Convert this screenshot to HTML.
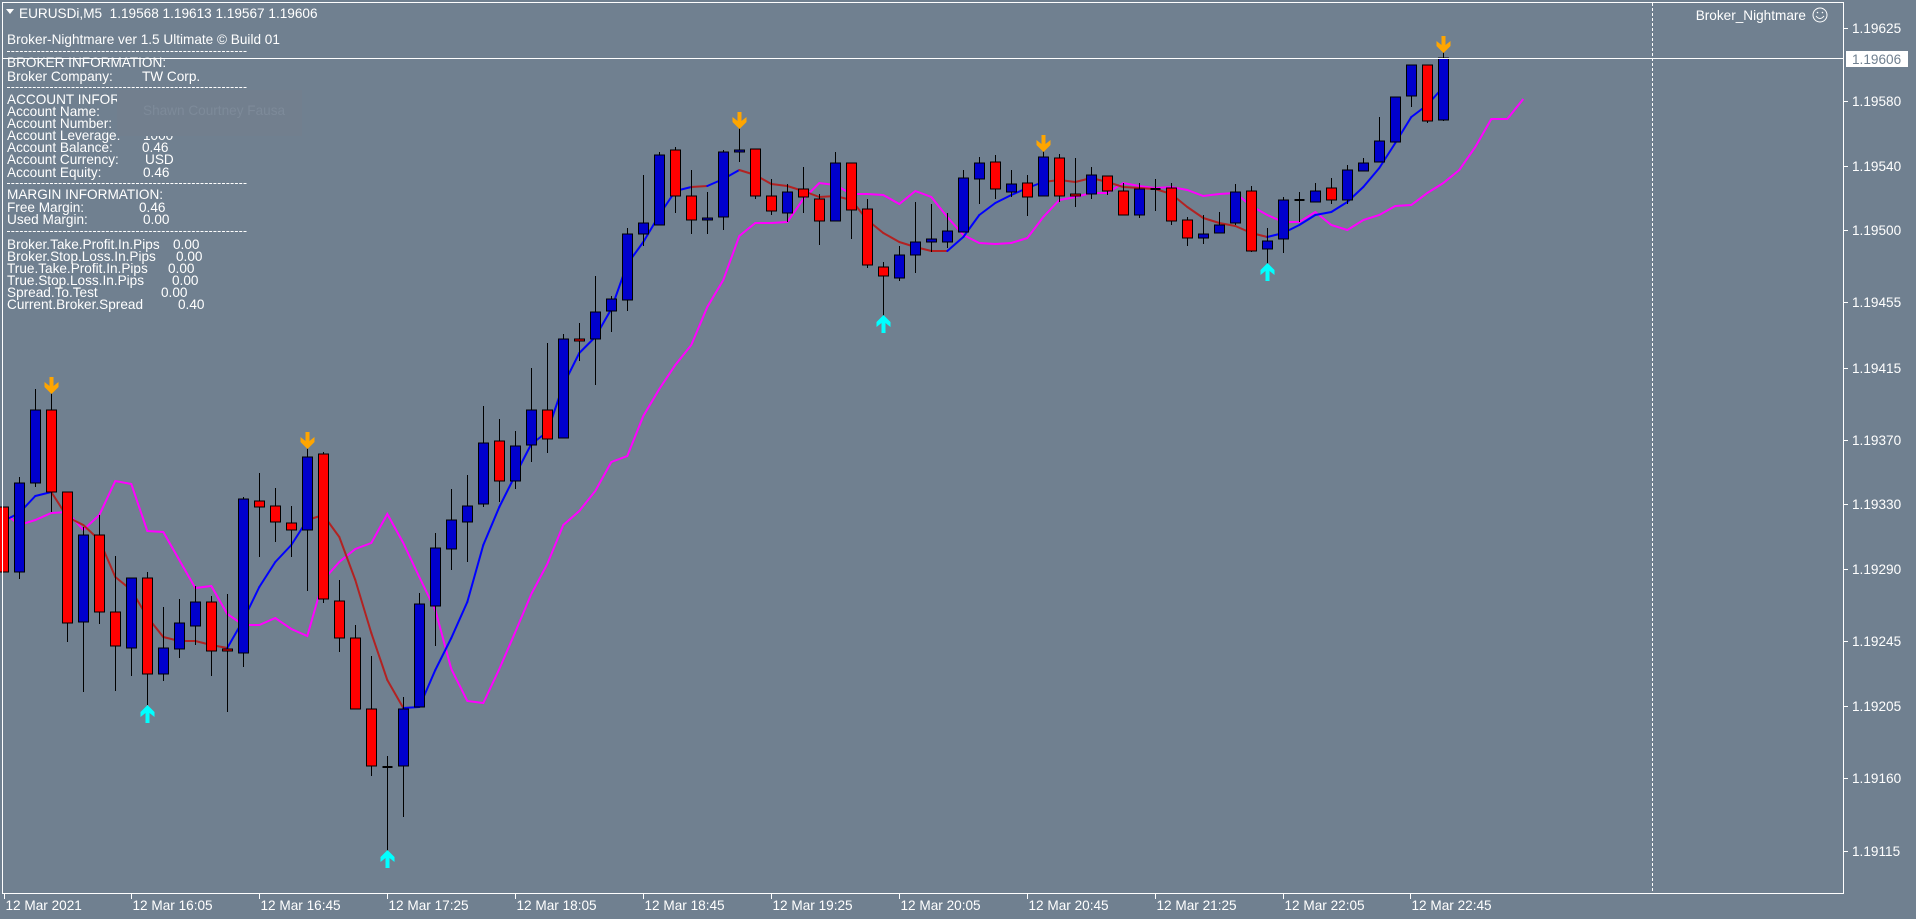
<!DOCTYPE html>
<html><head><meta charset="utf-8"><style>
html,body{margin:0;padding:0;background:#708090;overflow:hidden}
svg{display:block}
text{font-family:"Liberation Sans",sans-serif;fill:#fff;font-size:13.6px;white-space:pre}
</style></head><body>
<svg id="s" width="1916" height="919" viewBox="0 0 1916 919" xmlns="http://www.w3.org/2000/svg">
<rect width="1916" height="919" fill="#708090"/>
<g id="ind"></g>
<g id="cd"></g>
<line x1="2" y1="58.5" x2="1843" y2="58.5" stroke="#fff" stroke-width="1"/>
<line x1="1652.5" y1="3" x2="1652.5" y2="893" stroke="#fff" stroke-width="1" stroke-dasharray="3,2"/>
<rect x="2.5" y="2.5" width="1841" height="891" fill="none" stroke="#fff" stroke-width="1"/>
<polygon points="6,9 14,9 10,14" fill="#fff"/>
<text x="19" y="18" xml:space="preserve">EURUSDi,M5  1.19568 1.19613 1.19567 1.19606</text>
<text x="7" y="44">Broker-Nightmare ver 1.5 Ultimate © Build 01</text>
<g id="info"></g>
<rect x="117" y="90" width="185" height="46" fill="#727f8e"/>
<text x="143" y="115" style="fill:#7d8a99">Shawn Courtney Fausa</text>
<text x="1806" y="20" text-anchor="end">Broker_Nightmare</text>
<circle cx="1820" cy="15" r="7" fill="none" stroke="#fff" stroke-width="1"/>
<path d="M1816 16 Q1820 21 1824 16" fill="none" stroke="#fff"/>
<circle cx="1817.5" cy="12.5" r="0.8" fill="#fff"/><circle cx="1822.5" cy="12.5" r="0.8" fill="#fff"/>
<rect x="1846" y="51" width="62" height="16" fill="#fff"/>
<text x="1852" y="64" style="fill:#708090">1.19606</text>
<g id="ax"></g>
</svg>
<script>
var NS="http://www.w3.org/2000/svg";
function el(p,t,a,txt){var e=document.createElementNS(NS,t);for(var k in a)e.setAttribute(k,a[k]);if(txt!=null)e.textContent=txt;document.getElementById(p).appendChild(e);return e;}
var C=[
[0,'r',507,572,0,0],[1,'b',483,572,477,579],[2,'b',410,483,389,487],[3,'r',410,492,389,512],[4,'r',492,623,0,642],
[5,'b',535,622,527,692],[6,'r',535,612,515,624],[7,'r',612,646,556,691],[8,'b',578,648,0,676],[9,'r',578,674,572,705],
[10,'b',648,674,607,681],[11,'b',623,649,599,658],[12,'b',602,626,586,645],[13,'r',602,651,596,676],[14,'r',649,651,594,712],
[15,'b',499,653,497,667],[16,'r',501,507,473,557],[17,'r',506,522,488,542],[18,'r',523,530,506,557],[19,'b',457,530,443,591],
[20,'r',454,599,452,603],[21,'r',601,638,580,652],[22,'r',638,709,625,0],[23,'r',709,766,656,776],[24,'k',766,768,756,857],
[25,'b',709,766,697,817],[26,'b',604,707,593,0],[27,'b',548,606,533,646],[28,'b',520,549,489,570],[29,'b',506,522,475,562],
[30,'b',443,504,406,507],[31,'r',441,481,419,502],[32,'b',446,481,431,489],[33,'b',410,445,368,462],[34,'r',410,439,343,453],
[35,'b',339,438,334,0],[36,'r',339,341,323,361],[37,'b',312,339,276,385],[38,'b',299,311,296,332],[39,'b',234,300,228,311],
[40,'b',223,234,175,246],[41,'b',155,225,152,0],[42,'r',150,196,147,213],[43,'r',196,220,170,234],[44,'b',218,220,192,234],
[45,'b',152,217,150,230],[46,'b',150,152,123,162],[47,'r',149,196,0,199],[48,'r',196,211,179,215],[49,'b',192,213,184,222],
[50,'r',189,197,167,213],[51,'r',199,221,194,245],[52,'b',163,221,152,0],[53,'r',163,210,0,239],[54,'r',209,265,199,268],
[55,'r',267,276,262,333],[56,'b',255,278,246,281],[57,'b',242,255,202,273],[58,'b',239,242,204,252],[59,'b',231,242,213,248],
[60,'b',178,232,170,0],[61,'b',163,179,157,204],[62,'r',162,189,155,199],[63,'b',184,192,170,197],[64,'r',183,197,175,216],
[65,'b',157,196,146,0],[66,'r',158,196,154,202],[67,'r',194,196,158,207],[68,'b',175,194,167,199],[69,'r',176,191,0,195],
[70,'r',191,215,183,0],[71,'b',189,215,183,218],[72,'k',188,190,179,211],[73,'r',188,221,183,225],[74,'r',220,238,217,246],
[75,'b',234,238,215,244],[76,'b',225,233,212,0],[77,'b',192,223,184,225],[78,'r',191,251,186,252],[79,'b',241,249,228,271],
[80,'b',200,239,197,253],[81,'k',199,201,192,222],[82,'b',191,202,183,0],[83,'r',188,200,178,204],[84,'b',170,200,165,204],
[85,'b',163,171,158,0],[86,'b',141,162,117,0],[87,'b',97,142,0,0],[88,'b',65,96,0,107],[89,'r',65,121,0,123],[90,'b',58,120,47,121]];
function X(i){return 3.3+16*i;}
var F=[521,513,496,492,517,525,540,577,590,617,637,641,641,645,648,620,587,562,545,520,515,537,580,633,680,708,707,670,638,602,545,507,475,444,432,385,353,337,309,264,242,215,191,187,186,179,170,175,184,186,191,197,196,200,220,233,242,247,251,251,237,215,203,195,188,182,180,182,178,182,187,188,189,194,207,218,223,226,233,237,233,225,215,212,202,187,168,143,117,105,87];
var brown=[[3,14],[19,25],[43,44],[46,59],[65,79]];
function isBrown(i){for(var k=0;k<brown.length;k++)if(i>=brown[k][0]&&i<brown[k][1])return true;return false;}
var M=[512,525,520,513,512,530,515,481,484,531,532,560,588,586,614,625,625,618,629,636,580,562,549,543,514,543,577,610,669,701,703,669,632,594,564,525,511,491,462,456,416,389,365,345,307,280,236,223,223,222,199,183,185,194,194,195,204,191,197,217,235,243,244,243,238,217,200,197,193,193,183,186,188,187,190,196,194,193,206,215,222,222,212,225,230,220,215,206,205,193,183,170,147,119,119,99];
var pts="";for(var i=0;i<M.length;i++)pts+=X(i).toFixed(1)+","+M[i]+" ";
el('ind','polyline',{points:pts,fill:'none',stroke:'#ff00ff','stroke-width':2});
for(var i=0;i<F.length-1;i++){el('ind','line',{x1:X(i),y1:F[i],x2:X(i+1),y2:F[i+1],stroke:isBrown(i)?'#b22222':'#0000ff','stroke-width':2,'stroke-linecap':'round'});}
C.forEach(function(c){var x=Math.round(X(c[0]))+0.5,t=c[2],b=c[3],wt=c[4]||t,wb=c[5]||b;
el('cd','line',{x1:x,y1:wt,x2:x,y2:wb,stroke:'#000','stroke-width':1});
if(c[1]=='k'){el('cd','line',{x1:x-5,y1:t+1,x2:x+5,y2:t+1,stroke:'#000','stroke-width':2});}
else{var h=Math.max(b-t,2);el('cd','rect',{x:x-5,y:t,width:10,height:h,fill:c[1]=='b'?'#0000cd':'#ff0000',stroke:'#000','stroke-width':1});}});
function down(i,y){var x=Math.round(X(i))+0.5;el('cd','polygon',{points:[x-2,y,x+2,y,x+2,y+9,x+7,y+5,x+7,y+10,x,y+17,x-7,y+10,x-7,y+5,x-2,y+9].join(','),fill:'#ffa500'});}
function up(i,y){var x=Math.round(X(i))+0.5;el('cd','polygon',{points:[x,y,x+7,y+7,x+7,y+12,x+2,y+8,x+2,y+18,x-2,y+18,x-2,y+8,x-7,y+12,x-7,y+7].join(','),fill:'#00ffff'});}
down(3,377);down(19,432);down(46,112);down(65,135);down(90,36);
up(9,705);up(24,850);up(55,315);up(79,263);
var info=[[62,"BROKER INFORMATION:"],[76,"Broker Company:",142,"TW Corp."],[99,"ACCOUNT INFORMATION:"],[111,"Account Name:"],[123,"Account Number:"],[135,"Account Leverage:",143,"1000"],[147,"Account Balance:",142,"0.46"],[159,"Account Currency:",145,"USD"],[172,"Account Equity:",143,"0.46"],[194,"MARGIN INFORMATION:"],[207,"Free Margin:",139,"0.46"],[219,"Used Margin:",143,"0.00"],[244,"Broker.Take.Profit.In.Pips",173,"0.00"],[256,"Broker.Stop.Loss.In.Pips",176,"0.00"],[268,"True.Take.Profit.In.Pips",168,"0.00"],[280,"True.Stop.Loss.In.Pips",172,"0.00"],[292,"Spread.To.Test",161,"0.00"],[304,"Current.Broker.Spread",178,"0.40"]];
info.forEach(function(r){el('info','text',{x:7,y:r[0]+5},r[1]);if(r[2])el('info','text',{x:r[2],y:r[0]+5},r[3]);});
[51,87,183,231].forEach(function(y){el('info','line',{x1:7,y1:y+0.5,x2:247,y2:y+0.5,stroke:'#fff','stroke-width':1,'stroke-dasharray':'3,1.3'});});
var PL=[["1.19625",28],["1.19580",101],["1.19540",166],["1.19500",230],["1.19455",302],["1.19415",368],["1.19370",440],["1.19330",504],["1.19290",569],["1.19245",641],["1.19205",706],["1.19160",778],["1.19115",851]];
PL.forEach(function(p){el('ax','line',{x1:1844,y1:p[1]+0.5,x2:1848,y2:p[1]+0.5,stroke:'#fff'});el('ax','text',{x:1852,y:p[1]+5},p[0]);});
var DL=["12 Mar 2021","12 Mar 16:05","12 Mar 16:45","12 Mar 17:25","12 Mar 18:05","12 Mar 18:45","12 Mar 19:25","12 Mar 20:05","12 Mar 20:45","12 Mar 21:25","12 Mar 22:05","12 Mar 22:45"];
DL.forEach(function(d,j){var x=Math.round(3.5+127.9*j)+0.5;el('ax','line',{x1:x,y1:894,x2:x,y2:899,stroke:'#fff'});el('ax','text',{x:x+1,y:910},d);});
</script>
</body></html>
